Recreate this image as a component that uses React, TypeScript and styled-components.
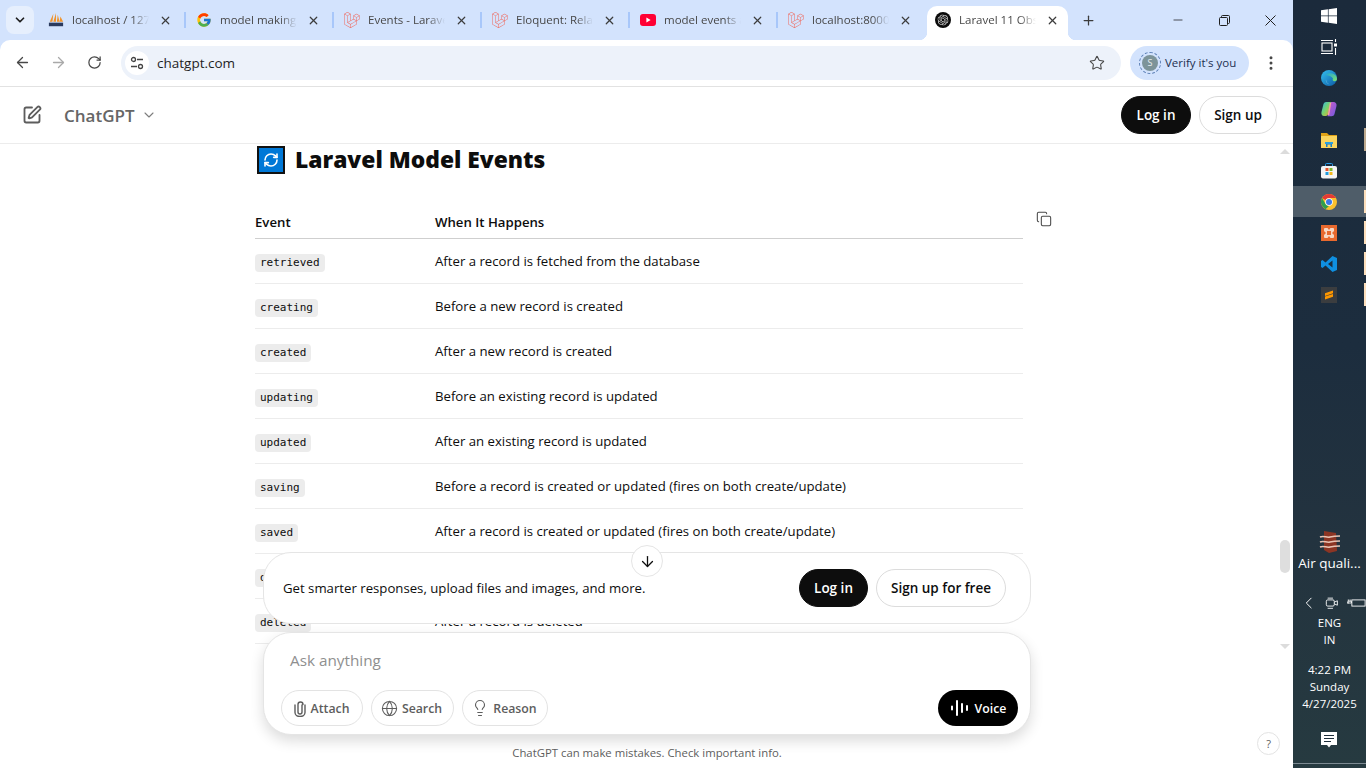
import React from 'react';
import styled, { createGlobalStyle } from 'styled-components';
import {
  ArrowDown,
  ArrowLeft,
  ArrowRight,
  ChevronDown,
  ChevronLeft,
  Copy,
  EllipsisVertical,
  Globe,
  Lightbulb,
  Minus,
  Plus,
  RefreshCw,
  RotateCw,
  SquarePen,
  Star,
  X,
} from 'lucide-react';
import { FcGoogle } from 'react-icons/fc';
import { SiLaravel, SiOpenai } from 'react-icons/si';

const SANS = `'Open Sans', 'Noto Sans', sans-serif`;
const MONO = `'DejaVu Sans Mono', 'Liberation Mono', monospace`;

const GlobalStyle = createGlobalStyle`
  html, body {
    margin: 0;
    padding: 0;
    width: 1366px;
    height: 768px;
    overflow: hidden;
    background: #fff;
  }
  * { box-sizing: border-box; }
`;

const Desktop = styled.div`
  display: flex;
  width: 1366px;
  height: 768px;
  font-family: ${SANS};
  overflow: hidden;
`;

const Browser = styled.div`
  width: 1293px;
  height: 768px;
  display: flex;
  flex-direction: column;
  background: #d3e3fd;
`;

// tab strip
const TabStrip = styled.div`
  display: flex;
  align-items: flex-start;
  height: 40px;
  flex-shrink: 0;
  padding-left: 6px;
`;

const TabSearch = styled.div`
  width: 28px;
  height: 28px;
  margin-top: 6px;
  margin-right: 4px;
  border-radius: 8px;
  background: #e6effd;
  display: flex;
  align-items: center;
  justify-content: center;
  color: #1f1f1f;
`;

const Tab = styled.div<{ $active?: boolean }>`
  position: relative;
  display: flex;
  align-items: center;
  flex-shrink: 0;
  width: ${({ $active }) => ($active ? '141px' : '146px')};
  height: 34px;
  margin-top: 6px;
  margin-left: ${({ $active }) => ($active ? '3px' : '0')};
  padding: 0 0 6px ${({ $active }) => ($active ? '8px' : '10px')};
  border-radius: 10px 10px 0 0;
  background: ${({ $active }) => ($active ? '#fff' : 'transparent')};
  ${({ $active }) =>
    $active &&
    `
    &::before, &::after {
      content: '';
      position: absolute;
      bottom: 0;
      width: 8px;
      height: 8px;
    }
    &::before {
      left: -8px;
      background: radial-gradient(circle at 0 0, transparent 8px, #fff 8.5px);
    }
    &::after {
      right: -8px;
      background: radial-gradient(circle at 100% 0, transparent 8px, #fff 8.5px);
    }
  `}
`;

const Favicon = styled.span`
  width: 16px;
  height: 16px;
  flex-shrink: 0;
  display: flex;
  align-items: center;
  justify-content: center;
`;

const TabTitle = styled.span`
  width: 77px;
  margin-left: 8px;
  font-size: 11.5px;
  line-height: 16px;
  color: #474747;
  white-space: nowrap;
  overflow: hidden;
  -webkit-mask-image: linear-gradient(to right, #000 78%, transparent 100%);
  mask-image: linear-gradient(to right, #000 78%, transparent 100%);
`;

const TabClose = styled.span`
  width: 16px;
  height: 16px;
  margin-left: 8px;
  flex-shrink: 0;
  display: flex;
  align-items: center;
  justify-content: center;
  color: #3c3c3c;
`;

const TabSeparator = styled.span`
  width: 2px;
  height: 16px;
  margin-top: 12px;
  flex-shrink: 0;
  background: #a8c7fa;
`;

const NewTab = styled.div`
  width: 16px;
  height: 16px;
  margin: 12px 0 0 12px;
  display: flex;
  align-items: center;
  justify-content: center;
  color: #3c3c3c;
`;

const WindowControls = styled.div`
  display: flex;
  margin-left: auto;
`;

const WindowButton = styled.div`
  width: 46px;
  height: 40px;
  display: flex;
  align-items: center;
  justify-content: center;
  color: #1f1f1f;
`;

// toolbar
const Toolbar = styled.div`
  display: flex;
  align-items: center;
  height: 47px;
  flex-shrink: 0;
  padding: 0 0 1px 4px;
  background: #fff;
  border-radius: 10px 10px 0 0;
  border-bottom: 1px solid #e2e2e2;
`;

const NavButton = styled.div<{ $dim?: boolean }>`
  width: 36px;
  height: 36px;
  display: flex;
  align-items: center;
  justify-content: center;
  color: ${({ $dim }) => ($dim ? '#a9a9a9' : '#474747')};
`;

const Omnibox = styled.div`
  display: flex;
  align-items: center;
  width: 1000px;
  height: 34px;
  margin-left: 9px;
  padding: 0 16px 0 4px;
  border-radius: 17px;
  background: #edf2fa;
`;

const SiteChip = styled.div`
  width: 24px;
  height: 24px;
  border-radius: 50%;
  background: #fff;
  display: flex;
  align-items: center;
  justify-content: center;
`;

const Url = styled.span`
  margin-left: 8px;
  font-size: 13.5px;
  color: #1f1f1f;
`;

const StarSlot = styled.div`
  margin-left: auto;
  display: flex;
  color: #474747;
`;

const VerifyPill = styled.div`
  display: flex;
  align-items: center;
  width: 119px;
  height: 34px;
  margin-left: 9px;
  padding-left: 12px;
  border-radius: 17px;
  background: #d3e3fd;
`;

const Avatar = styled.div`
  width: 16px;
  height: 16px;
  margin: 0 4px 0 0;
  border-radius: 50%;
  background: #7d9499;
  outline: 1px dashed #5f82b8;
  outline-offset: 2px;
  color: #e8eef0;
  font-size: 9px;
  display: flex;
  align-items: center;
  justify-content: center;
`;

const VerifyText = styled.span`
  margin-left: 3px;
  font-size: 11.5px;
  color: #1d3050;
`;

const MenuSlot = styled.div`
  margin-left: 4px;
  width: 36px;
  display: flex;
  justify-content: center;
  color: #474747;
`;

// chatgpt page
const Page = styled.div`
  position: relative;
  flex: 1;
  min-height: 0;
  display: flex;
  flex-direction: column;
  background: #fff;
`;

const PageHeader = styled.header`
  display: flex;
  align-items: center;
  height: 57px;
  flex-shrink: 0;
  padding: 0 16px 0 22px;
  border-bottom: 1px solid #ececec;
`;

const ModelName = styled.span`
  margin-left: 22px;
  font-size: 17px;
  font-weight: 600;
  color: #666;
`;

const ModelCaret = styled.span`
  margin-left: 6px;
  display: flex;
  color: #7d7d7d;
`;

const HeaderActions = styled.div`
  margin-left: auto;
  display: flex;
  gap: 8px;
`;

const PillButton = styled.button<{ $dark?: boolean; $w: number }>`
  width: ${({ $w }) => $w}px;
  height: 38px;
  padding: 0;
  border-radius: 19px;
  border: 1px solid ${({ $dark }) => ($dark ? '#0d0d0d' : '#dcdcdc')};
  background: ${({ $dark }) => ($dark ? '#0d0d0d' : '#fff')};
  color: ${({ $dark }) => ($dark ? '#fff' : '#0d0d0d')};
  font-family: ${SANS};
  font-size: 13.5px;
  font-weight: 600;
`;

const Thread = styled.div`
  flex: 1;
  min-height: 0;
  overflow: hidden;
  padding: 2px 0 0 255px;
`;

const Heading = styled.h3`
  display: flex;
  align-items: center;
  height: 28px;
  margin: 0 0 31px 2px;
  padding-bottom: 2px;
  font-size: 22.8px;
  font-weight: 800;
  color: #0d0d0d;
`;

const EmojiBox = styled.span`
  width: 28px;
  height: 28px;
  margin: 2px 10px 0 0;
  border: 2px solid #111;
  background: #0078d7;
  display: flex;
  align-items: center;
  justify-content: center;
  color: #fff;
`;

const TableWrap = styled.div`
  position: relative;
  width: 768px;
`;

const CopyButton = styled.div`
  position: absolute;
  top: 6px;
  right: -29px;
  display: flex;
  color: #4a4a4a;
`;

const HeadRow = styled.div`
  display: grid;
  grid-template-columns: 180px 1fr;
  align-items: center;
  height: 34px;
  border-bottom: 1px solid #cfcfcf;
  font-size: 13.2px;
  font-weight: 600;
  color: #0d0d0d;
`;

const Row = styled.div`
  display: grid;
  grid-template-columns: 180px 1fr;
  align-items: center;
  height: 45px;
  border-bottom: 1px solid #ececec;
  font-size: 13.2px;
  color: #0d0d0d;
`;

const Code = styled.code`
  justify-self: start;
  height: 18px;
  margin-top: 4px;
  padding: 0 5px;
  border-radius: 4px;
  background: #ececec;
  font-family: ${MONO};
  font-size: 11px;
  line-height: 18px;
  color: #0d0d0d;
`;

const Dock = styled.div`
  position: absolute;
  left: 263px;
  bottom: 0;
  width: 768px;
  display: flex;
  flex-direction: column;
  gap: 8px;
`;

const Banner = styled.div`
  position: relative;
  display: flex;
  align-items: center;
  justify-content: space-between;
  height: 72px;
  padding: 0 24px 0 19px;
  border: 1px solid #e5e5e5;
  border-radius: 28px;
  background: #fff;
`;

const BannerText = styled.span`
  font-size: 13.2px;
  color: #0d0d0d;
`;

const BannerActions = styled.div`
  display: flex;
  gap: 8px;
`;

const ScrollDown = styled.div`
  position: absolute;
  top: -8px;
  left: 367px;
  width: 32px;
  height: 32px;
  border: 1px solid #e5e5e5;
  border-radius: 50%;
  background: #fff;
  display: flex;
  align-items: center;
  justify-content: center;
  color: #0d0d0d;
`;

const Composer = styled.div`
  display: flex;
  flex-direction: column;
  height: 103px;
  padding: 16px 12px 8px 17px;
  border: 1px solid #e5e5e5;
  border-radius: 28px;
  background: #fff;
  box-shadow: 0 6px 14px rgba(0, 0, 0, 0.14);
`;

const Placeholder = styled.div`
  margin-left: 9px;
  font-size: 15.3px;
  line-height: 22px;
  color: #8f8f8f;
`;

const ComposerRow = styled.div`
  margin-top: auto;
  display: flex;
  gap: 8px;
`;

const ToolButton = styled.div<{ $w: number }>`
  display: flex;
  align-items: center;
  justify-content: center;
  gap: 4px;
  width: ${({ $w }) => $w}px;
  height: 36px;
  padding-right: 2px;
  border: 1px solid #e3e3e3;
  border-radius: 18px;
  font-size: 12.3px;
  font-weight: 600;
  color: #5d5d5d;
`;

const VoiceButton = styled.div`
  display: flex;
  align-items: center;
  justify-content: center;
  gap: 5px;
  width: 80px;
  height: 36px;
  margin-left: auto;
  border-radius: 18px;
  background: #000;
  font-size: 12.3px;
  font-weight: 600;
  color: #fff;
`;

const Disclaimer = styled.div`
  height: 25px;
  padding-top: 2px;
  text-align: center;
  font-size: 11.35px;
  line-height: 16px;
  color: #5d5d5d;
`;

const HelpButton = styled.div`
  position: absolute;
  right: 13px;
  bottom: 13px;
  width: 23px;
  height: 23px;
  border: 1px solid #e3e3e3;
  border-radius: 50%;
  display: flex;
  align-items: center;
  justify-content: center;
  font-size: 11px;
  color: #5d5d5d;
`;

const ScrollTrack = styled.div`
  position: absolute;
  top: 57px;
  right: 3px;
  width: 10px;
  height: 512px;
  display: flex;
  flex-direction: column;
  align-items: center;
  justify-content: space-between;
`;

const ScrollArrow = styled.span<{ $down?: boolean }>`
  width: 0;
  height: 0;
  border-left: 5px solid transparent;
  border-right: 5px solid transparent;
  ${({ $down }) =>
    $down ? 'border-top: 5px solid #dcdcdc;' : 'border-bottom: 5px solid #dcdcdc;'}
  margin: ${({ $down }) => ($down ? '0 0 7px' : '5px 0 0')};
`;

const ScrollThumb = styled.div`
  position: absolute;
  top: 396px;
  left: 0;
  width: 10px;
  height: 33px;
  border-radius: 5px;
  background: #dedede;
`;

// windows taskbar, docked on the right
const Taskbar = styled.aside`
  position: relative;
  width: 73px;
  height: 768px;
  display: flex;
  flex-direction: column;
  background: linear-gradient(180deg, #1b2a3b 0%, #1c2d3e 45%, #23333f 70%, #263a40 100%);
  color: #fff;
`;

const TaskItem = styled.div<{ $active?: boolean; $mark?: string }>`
  position: relative;
  height: 31px;
  display: flex;
  align-items: center;
  justify-content: center;
  padding-right: 1px;
  background: ${({ $active }) => ($active ? '#4f5d69' : 'transparent')};
  &::after {
    content: '';
    position: absolute;
    top: 4px;
    bottom: 4px;
    right: 0;
    width: 2px;
    background: ${({ $mark }) => $mark || 'transparent'};
  }
`;

const Weather = styled.div`
  margin-top: 220px;
  display: flex;
  flex-direction: column;
  align-items: center;
  font-size: 13.5px;
`;

const WeatherText = styled.span`
  margin-top: -1px;
  line-height: 20px;
  white-space: nowrap;
`;

const Tray = styled.div`
  margin-top: 19px;
  height: 22px;
  display: flex;
  align-items: center;
  padding-left: 6px;
  gap: 7px;
  overflow: hidden;
`;

const TrayText = styled.div<{ $gap?: number }>`
  margin-top: ${({ $gap }) => $gap || 0}px;
  text-align: center;
  font-size: 11.5px;
  line-height: 17px;
`;

const NotifySlot = styled.div`
  margin-top: 20px;
  margin-left: -2px;
  display: flex;
  justify-content: center;
`;

const EdgeLine = styled.div`
  position: absolute;
  left: 0;
  right: 0;
  bottom: 4px;
  height: 1px;
  background: #7c8a92;
`;

const PmaIcon = () => (
  <svg width="18" height="16" viewBox="0 0 18 16">
    <path d="M6 1 2 10h3zM9 0 6 10h3zM11 2l-1 8h3zM14 4l-1 6h4z" fill="#f0932b" />
    <rect x="1" y="11" width="16" height="4" fill="#2a3a5e" />
  </svg>
);

const Laravel = () => <SiLaravel size={16} color="#f0685c" />;

const YouTube = () => (
  <svg width="16" height="12" viewBox="0 0 16 12">
    <rect width="16" height="12" rx="3" fill="#ff0033" />
    <path d="M6.4 3.4v5.2L10.6 6z" fill="#fff" />
  </svg>
);

const ChatFavicon = () => (
  <svg width="16" height="16" viewBox="0 0 16 16">
    <circle cx="8" cy="8" r="8" fill="#0b0b0b" />
    <g transform="translate(2.5 2.5)">
      <SiOpenai size={11} color="#dcdcdc" />
    </g>
  </svg>
);

const tabs = [
  { title: 'localhost / 127.0.0.1', icon: <PmaIcon /> },
  { title: 'model making in laravel', icon: <FcGoogle size={16} /> },
  { title: 'Events - Laravel 11', icon: <Laravel /> },
  { title: 'Eloquent: Relationships', icon: <Laravel /> },
  { title: 'model events and observers', icon: <YouTube /> },
  { title: 'localhost:8000/posts', icon: <Laravel /> },
];

const events = [
  ['retrieved', 'After a record is fetched from the database'],
  ['creating', 'Before a new record is created'],
  ['created', 'After a new record is created'],
  ['updating', 'Before an existing record is updated'],
  ['updated', 'After an existing record is updated'],
  ['saving', 'Before a record is created or updated (fires on both create/update)'],
  ['saved', 'After a record is created or updated (fires on both create/update)'],
  ['deleting', 'Before a record is deleted'],
  ['deleted', 'After a record is deleted'],
];

const SiteTune = () => (
  <svg width="14" height="14" viewBox="0 0 14 14" fill="none" stroke="#444" strokeWidth="1.3">
    <circle cx="3.5" cy="3.5" r="2" />
    <path d="M7 3.5h6M1 10.5h6" />
    <circle cx="10.5" cy="10.5" r="2" />
  </svg>
);

const RestoreIcon = () => (
  <svg width="11" height="11" viewBox="0 0 11 11" fill="none" stroke="#1f1f1f" strokeWidth="1">
    <rect x="0.5" y="2.5" width="8" height="8" rx="1" />
    <path d="M2.5 2.5V1.5a1 1 0 0 1 1-1h6a1 1 0 0 1 1 1v6a1 1 0 0 1-1 1h-1" />
  </svg>
);

const CloseLarge = () => (
  <svg width="11" height="11" viewBox="0 0 11 11" stroke="#1f1f1f" strokeWidth="1">
    <path d="M.5.5l10 10M10.5.5l-10 10" />
  </svg>
);

const Clip = () => (
  <svg width="14" height="17" viewBox="0 0 14 17" fill="none" stroke="#5d5d5d" strokeWidth="1.4" strokeLinecap="round">
    <path d="M9 5v7a2 2 0 0 1-4 0V4.500a2.500 2.500 0 0 1 5 0M12 5v7.500a5 4 0 0 1-10 0V5" />
  </svg>
);

const VoiceBars = () => (
  <svg width="20" height="18" viewBox="0 0 20 18" stroke="#fff" strokeWidth="2" strokeLinecap="round">
    <path d="M2 7.5v3M7 2v14M12 5v8M17 7v4" />
  </svg>
);

const WinLogo = () => (
  <svg width="16" height="16" viewBox="0 0 16 16" fill="#fff">
    <path d="M0 2.3 6.9 1.3v6.3H0zM7.6 1.2 16 0v7.6H7.6zM0 8.3h6.9v6.4L0 13.700zM7.6 8.3H16V16l-8.4-1.200z" />
  </svg>
);

const TaskViewIcon = () => (
  <svg width="16" height="16" viewBox="0 0 16 16" fill="none" stroke="#fff" strokeWidth="1.1">
    <rect x="1" y="4" width="10" height="8" />
    <path d="M0 1.500h12M0 14.500h12M14.500 0v3M14.500 9v7" />
    <rect x="13" y="4.500" width="3" height="3" fill="#fff" stroke="none" />
  </svg>
);

const EdgeIcon = () => (
  <svg width="16" height="16" viewBox="0 0 16 16">
    <defs>
      <linearGradient id="edgeA" x1="0" y1="0" x2="1" y2="1">
        <stop offset="0" stopColor="#35c1f1" />
        <stop offset="1" stopColor="#0c59a4" />
      </linearGradient>
      <linearGradient id="edgeB" x1="0" y1="0" x2="1" y2="1">
        <stop offset="0" stopColor="#1fa3d8" />
        <stop offset="1" stopColor="#7fe36a" />
      </linearGradient>
    </defs>
    <circle cx="8" cy="8" r="8" fill="url(#edgeA)" />
    <path d="M4 5a7 6 0 0 1 12 4c0 2-2 2.500-3.500 2-1-.4-1-1.500-.5-2.500C11 6 6 5 4 5z" fill="url(#edgeB)" />
    <path d="M5 9a4 4 0 0 0 5 5c-3 1-5-2-5-5z" fill="#9ad8f5" />
  </svg>
);

const CopilotIcon = () => (
  <svg width="16" height="16" viewBox="0 0 16 16">
    <defs>
      <linearGradient id="copA" x1="0" y1="0" x2="1" y2="1">
        <stop offset="0" stopColor="#d05ac8" />
        <stop offset="1" stopColor="#6b5be0" />
      </linearGradient>
      <linearGradient id="copB" x1="0" y1="0" x2="1" y2="1">
        <stop offset="0" stopColor="#2fb5e8" />
        <stop offset="0.5" stopColor="#7bd36a" />
        <stop offset="1" stopColor="#f2a230" />
      </linearGradient>
    </defs>
    <path d="M9 1h3.500c2 0 3.500 2 3 4l-2 8c-.4 1.500-1.500 2.200-3 2.200H6.500z" fill="url(#copA)" />
    <path d="M5 1h5L7 13c-.3 1.500-1.500 2-2.500 2H3C1 15 0 13 .5 11L2.500 3C3 1.800 4 1 5 1z" fill="url(#copB)" />
    <path d="M9.500 2 7.500 14" stroke="#f7a0a0" strokeWidth="1.500" />
  </svg>
);

const FolderIcon = () => (
  <svg width="16" height="16" viewBox="0 0 16 16">
    <path d="M0 1h6l2 2h8v3H0z" fill="#e0a216" />
    <rect y="4" width="16" height="12" fill="#fbd55e" />
    <path d="M5 15v-4h6v4H9.500v-2.500h-3V15z" fill="#1b7fc4" />
    <rect x="4" y="10" width="8" height="2" fill="#2a9fe0" />
  </svg>
);

const StoreIcon = () => (
  <svg width="16" height="16" viewBox="0 0 16 16">
    <path d="M4.500 3V1.500a1 1 0 0 1 1-1h5a1 1 0 0 1 1 1V3" fill="none" stroke="#2b9de8" strokeWidth="1" />
    <rect y="3" width="16" height="12.500" rx="2" fill="#f4f4f4" />
    <rect x="4.500" y="5" width="3" height="3" fill="#e8532b" />
    <rect x="8.500" y="5" width="3" height="3" fill="#7cb82f" />
    <rect x="4.500" y="9" width="3" height="3" fill="#1f9bde" />
    <rect x="8.500" y="9" width="3" height="3" fill="#f5b81c" />
  </svg>
);

const ChromeIcon = () => (
  <svg width="16" height="16" viewBox="0 0 16 16">
    <circle cx="8" cy="8" r="8" fill="#fbc02d" />
    <path d="M8 0a8 8 0 0 1 6.930 4H8a4 4 0 0 0-3.460 2L1.070 4A8 8 0 0 1 8 0z" fill="#e53935" />
    <path d="M1.070 4l3.470 6A4 4 0 0 0 8 12l-3.460 3.200A8 8 0 0 1 1.070 4z" fill="#2e9e4f" />
    <circle cx="8" cy="8" r="3.800" fill="#fff" />
    <circle cx="8" cy="8" r="3" fill="#3b78e7" />
  </svg>
);

const XamppIcon = () => (
  <svg width="16" height="16" viewBox="0 0 16 16">
    <rect width="16" height="16" fill="#e8692e" />
    <path d="M4 3h2.500L8 5l1.500-2H12a1 1 0 0 1 1 1v2L11 8l2 2v2a1 1 0 0 1-1 1H9.500L8 11l-1.500 2H4a1 1 0 0 1-1-1v-2l2-2-2-2V4a1 1 0 0 1 1-1z" fill="#f7d9c6" />
    <rect x="6" y="6" width="4" height="4" fill="#e8692e" />
  </svg>
);

const VsCodeIcon = () => (
  <svg width="16" height="16" viewBox="0 0 16 16">
    <path d="M11.500 0 16 2v12l-4.500 2-7-6.500L1.500 12 0 11V5l1.500-1 3 2.500zM11.500 4.500 7 8l4.500 3.500z" fill="#0f8fe0" />
  </svg>
);

const SublimeIcon = () => (
  <svg width="16" height="16" viewBox="0 0 16 16">
    <rect width="16" height="16" fill="#3b3d3f" />
    <path d="M4 6.200 12 3.500v2.700L4 8.900zM4 9.500l8-2.500v2.700l-8 2.800z" fill="#ff9800" />
  </svg>
);

const AirIcon = () => (
  <svg width="22" height="24" viewBox="0 0 22 24" fill="none">
    <path d="M5 1l12 2 1 18-8 2-5-3z" fill="#8c3524" />
    <path d="M1 7c4-2 6 1 10 0s6-1 10-1M1 12c4-2 6 1 10 0s6-1 10-1M1 17c4-2 6 1 10 0s6-1 10-1" stroke="#e8c3b4" strokeWidth="1.500" />
  </svg>
);

const MeetIcon = () => (
  <svg width="16" height="16" viewBox="0 0 16 16" fill="none" stroke="#fff" strokeWidth="1">
    <rect x="1.500" y="4.500" width="9" height="7" rx="1.500" />
    <path d="M10.500 7l3.500-1.500v5L10.500 9M3 2.500h6M3 14h6" />
  </svg>
);

const BatteryIcon = () => (
  <svg width="22" height="14" viewBox="0 0 22 14" fill="none" stroke="#fff" strokeWidth="1">
    <rect x="5.500" y="3.500" width="15" height="7" />
    <path d="M0 7h2M3.500 3v2M1.500 3v2M1 5h4v2H1z" />
  </svg>
);

const NotifyIcon = () => (
  <svg width="16" height="16" viewBox="0 0 16 16">
    <path d="M0 0h16v13h-6l-2 2.500L6 13H0z" fill="#fff" />
    <path d="M3 3.500h10M3 6.500h10M3 9.500h7" stroke="#1f2f3c" strokeWidth="1" />
  </svg>
);

const taskApps: { icon: React.ReactNode; mark?: string; active?: boolean }[] = [
  { icon: <WinLogo /> },
  { icon: <TaskViewIcon /> },
  { icon: <EdgeIcon /> },
  { icon: <CopilotIcon /> },
  { icon: <FolderIcon />, mark: '#bda98e' },
  { icon: <StoreIcon /> },
  { icon: <ChromeIcon />, mark: '#fddfbc', active: true },
  { icon: <XamppIcon />, mark: '#fddfbc' },
  { icon: <VsCodeIcon />, mark: '#fddfbc' },
  { icon: <SublimeIcon />, mark: '#fddfbc' },
];

export default function App() {
  return (
    <>
      <GlobalStyle />
      <Desktop>
        <Browser>
          <TabStrip>
            <TabSearch>
              <ChevronDown size={14} strokeWidth={3} />
            </TabSearch>
            {tabs.map((tab, i) => (
              <React.Fragment key={tab.title}>
                <Tab>
                  <Favicon>{tab.icon}</Favicon>
                  <TabTitle>{tab.title}</TabTitle>
                  <TabClose>
                    <X size={13} strokeWidth={2.2} />
                  </TabClose>
                </Tab>
                {i < tabs.length - 1 && <TabSeparator />}
              </React.Fragment>
            ))}
            <Tab $active>
              <Favicon>
                <ChatFavicon />
              </Favicon>
              <TabTitle>Laravel 11 Observers</TabTitle>
              <TabClose>
                <X size={13} strokeWidth={2.2} />
              </TabClose>
            </Tab>
            <NewTab>
              <Plus size={15} strokeWidth={2} />
            </NewTab>
            <WindowControls>
              <WindowButton>
                <Minus size={14} strokeWidth={1.3} />
              </WindowButton>
              <WindowButton>
                <RestoreIcon />
              </WindowButton>
              <WindowButton>
                <CloseLarge />
              </WindowButton>
            </WindowControls>
          </TabStrip>

          <Toolbar>
            <NavButton>
              <ArrowLeft size={17} strokeWidth={1.8} />
            </NavButton>
            <NavButton $dim>
              <ArrowRight size={17} strokeWidth={1.8} />
            </NavButton>
            <NavButton>
              <RotateCw size={15} strokeWidth={2} />
            </NavButton>
            <Omnibox>
              <SiteChip>
                <SiteTune />
              </SiteChip>
              <Url>chatgpt.com</Url>
              <StarSlot>
                <Star size={16} strokeWidth={1.6} />
              </StarSlot>
            </Omnibox>
            <VerifyPill>
              <Avatar>S</Avatar>
              <VerifyText>Verify it's you</VerifyText>
            </VerifyPill>
            <MenuSlot>
              <EllipsisVertical size={18} strokeWidth={2} />
            </MenuSlot>
          </Toolbar>

          <Page>
            <PageHeader>
              <SquarePen size={20} color="#5d5d5d" strokeWidth={2.2} />
              <ModelName>ChatGPT</ModelName>
              <ModelCaret>
                <ChevronDown size={16} strokeWidth={1.6} />
              </ModelCaret>
              <HeaderActions>
                <PillButton $dark $w={70}>Log in</PillButton>
                <PillButton $w={78}>Sign up</PillButton>
              </HeaderActions>
            </PageHeader>

            <Thread>
              <Heading>
                <EmojiBox>
                  <RefreshCw size={16} strokeWidth={2.4} />
                </EmojiBox>
                Laravel Model Events
              </Heading>
              <TableWrap>
                <CopyButton>
                  <Copy size={16} strokeWidth={1.6} />
                </CopyButton>
                <HeadRow>
                  <span>Event</span>
                  <span>When It Happens</span>
                </HeadRow>
                {events.map(([name, when]) => (
                  <Row key={name}>
                    <Code>{name}</Code>
                    <span>{when}</span>
                  </Row>
                ))}
              </TableWrap>
            </Thread>

            <ScrollTrack>
              <ScrollArrow />
              <ScrollThumb />
              <ScrollArrow $down />
            </ScrollTrack>

            <Dock>
              <Banner>
                <ScrollDown>
                  <ArrowDown size={17} strokeWidth={1.8} />
                </ScrollDown>
                <BannerText>Get smarter responses, upload files and images, and more.</BannerText>
                <BannerActions>
                  <PillButton $dark $w={69}>Log in</PillButton>
                  <PillButton $w={130}>Sign up for free</PillButton>
                </BannerActions>
              </Banner>
              <Composer>
                <Placeholder>Ask anything</Placeholder>
                <ComposerRow>
                  <ToolButton $w={82}>
                    <Clip />
                    Attach
                  </ToolButton>
                  <ToolButton $w={83}>
                    <Globe size={17} strokeWidth={1.5} />
                    Search
                  </ToolButton>
                  <ToolButton $w={86}>
                    <Lightbulb size={18} strokeWidth={1.5} />
                    Reason
                  </ToolButton>
                  <VoiceButton>
                    <VoiceBars />
                    Voice
                  </VoiceButton>
                </ComposerRow>
              </Composer>
              <Disclaimer>ChatGPT can make mistakes. Check important info.</Disclaimer>
            </Dock>

            <HelpButton>?</HelpButton>
          </Page>
        </Browser>

        <Taskbar>
          {taskApps.map((app, i) => (
            <TaskItem key={i} $active={app.active} $mark={app.mark}>
              {app.icon}
            </TaskItem>
          ))}
          <Weather>
            <AirIcon />
            <WeatherText>Air quali...</WeatherText>
          </Weather>
          <Tray>
            <ChevronLeft size={22} strokeWidth={1.2} />
            <MeetIcon />
            <BatteryIcon />
          </Tray>
          <TrayText>
            ENG
            <br />
            IN
          </TrayText>
          <TrayText $gap={13}>
            4:22 PM
            <br />
            Sunday
            <br />
            4/27/2025
          </TrayText>
          <NotifySlot>
            <NotifyIcon />
          </NotifySlot>
          <EdgeLine />
        </Taskbar>
      </Desktop>
    </>
  );
}
